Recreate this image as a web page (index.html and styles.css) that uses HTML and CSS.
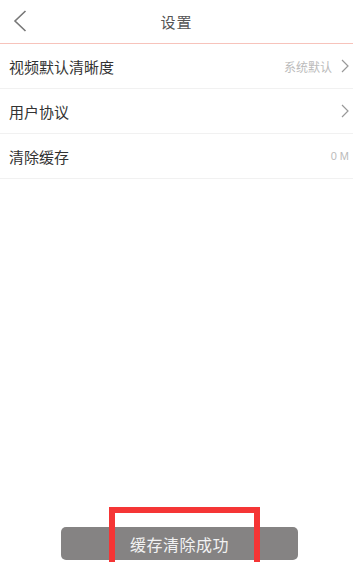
FILE: index.html
```html
<!DOCTYPE html>
<html lang="zh">
<head>
<meta charset="utf-8">
<link rel="stylesheet" href="styles.css">
</head>
<body>
<div class="page">
  <header class="topbar">
    <svg class="back" width="14" height="22" viewBox="0 0 14 22"><path d="M12.5 1 L2 11 L12.5 21" fill="none" stroke="#777" stroke-width="1.6"/></svg>
    <div class="title">设置</div>
  </header>
  <div class="list">
    <div class="row">
      <span class="label">视频默认清晰度</span>
      <span class="value">系统默认</span>
      <svg class="arrow" width="8" height="14" viewBox="0 0 8 14"><path d="M1 1 L7 7 L1 13" fill="none" stroke="#999" stroke-width="1.2"/></svg>
    </div>
    <div class="row">
      <span class="label">用户协议</span>
      <svg class="arrow" width="8" height="14" viewBox="0 0 8 14"><path d="M1 1 L7 7 L1 13" fill="none" stroke="#999" stroke-width="1.2"/></svg>
    </div>
    <div class="row">
      <span class="label">清除缓存</span>
      <span class="value size">0 M</span>
    </div>
  </div>
  <div class="toast">缓存清除成功</div>
  <div class="mark"></div>
</div>
</body>
</html>
```
FILE: styles.css
```css
html, body {
  margin: 0;
  padding: 0;
  background: #fff;
}
.page {
  position: relative;
  width: 353px;
  height: 562px;
  overflow: hidden;
  font-family: "Noto Sans CJK SC", "Noto Sans", sans-serif;
}
.topbar {
  position: relative;
  height: 43px;
  border-bottom: 1px solid #f7c3bb;
  display: flex;
  align-items: center;
  justify-content: center;
}
.back {
  position: absolute;
  left: 13px;
  top: 10px;
}
.title {
  font-size: 15px;
  color: #555;
  letter-spacing: 1px;
}
.row {
  height: 44px;
  border-bottom: 1px solid #f1f1f1;
  display: flex;
  align-items: center;
  padding: 0 4px 0 9px;
}
.label {
  font-size: 15px;
  color: #333;
  flex: 1;
}
.value {
  font-size: 12px;
  color: #bbb;
  margin-right: 9px;
}
.value.size {
  margin-right: 0;
  font-family: "Liberation Sans", "Noto Sans", sans-serif;
  font-size: 11px;
}
.arrow {
  display: block;
}
.toast {
  position: absolute;
  left: 61px;
  top: 527px;
  width: 237px;
  height: 33px;
  border-radius: 5px;
  background: #858383;
  color: #f2f2f2;
  font-size: 16px;
  display: flex;
  align-items: center;
  justify-content: center;
  letter-spacing: 0.5px;
}
.mark {
  position: absolute;
  left: 109px;
  top: 507px;
  width: 139px;
  height: 70px;
  border: 6px solid #f53535;
}
```
